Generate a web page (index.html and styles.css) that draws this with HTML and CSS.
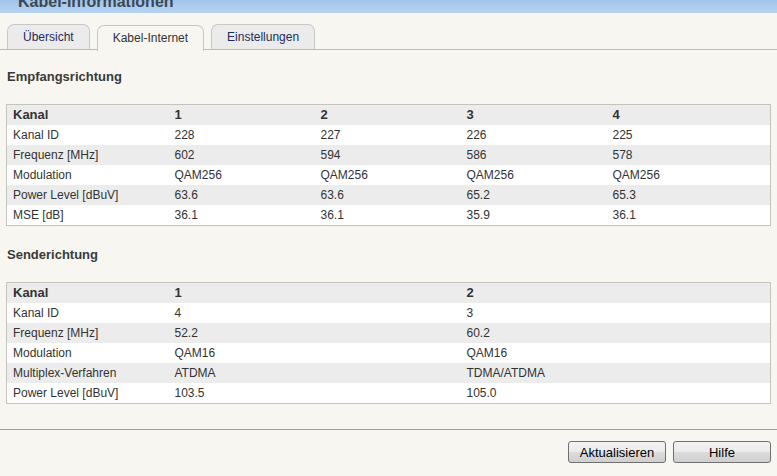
FILE: index.html
```html
<!DOCTYPE html>
<html lang="de">
<head>
    <meta charset="UTF-8">
    <title>Kabel-Informationen</title>
    <link rel="stylesheet" href="styles.css">
</head>
<body>
    <div class="title-bar">
        <h1>Kabel-Informationen</h1>
    </div>

    <ul class="tabs">
        <li class="tab">Übersicht</li>
        <li class="tab active">Kabel-Internet</li>
        <li class="tab">Einstellungen</li>
    </ul>

    <div class="content">
        <h2>Empfangsrichtung</h2>
        <table class="info">
            <colgroup>
                <col class="col-label">
                <col class="col-val">
                <col class="col-val">
                <col class="col-val">
                <col>
            </colgroup>
            <tr class="head"><th>Kanal</th><th>1</th><th>2</th><th>3</th><th>4</th></tr>
            <tr><td>Kanal ID</td><td>228</td><td>227</td><td>226</td><td>225</td></tr>
            <tr><td>Frequenz [MHz]</td><td>602</td><td>594</td><td>586</td><td>578</td></tr>
            <tr><td>Modulation</td><td>QAM256</td><td>QAM256</td><td>QAM256</td><td>QAM256</td></tr>
            <tr><td>Power Level [dBuV]</td><td>63.6</td><td>63.6</td><td>65.2</td><td>65.3</td></tr>
            <tr><td>MSE [dB]</td><td>36.1</td><td>36.1</td><td>35.9</td><td>36.1</td></tr>
        </table>

        <h2>Senderichtung</h2>
        <table class="info">
            <colgroup>
                <col class="col-label">
                <col class="col-wide">
                <col>
            </colgroup>
            <tr class="head"><th>Kanal</th><th>1</th><th>2</th></tr>
            <tr><td>Kanal ID</td><td>4</td><td>3</td></tr>
            <tr><td>Frequenz [MHz]</td><td>52.2</td><td>60.2</td></tr>
            <tr><td>Modulation</td><td>QAM16</td><td>QAM16</td></tr>
            <tr><td>Multiplex-Verfahren</td><td>ATDMA</td><td>TDMA/ATDMA</td></tr>
            <tr><td>Power Level [dBuV]</td><td>103.5</td><td>105.0</td></tr>
        </table>
    </div>

    <div class="actions">
        <button class="btn">Aktualisieren</button>
        <button class="btn">Hilfe</button>
    </div>
</body>
</html>
```

FILE: styles.css
```css
body {
    margin: 0;
    background: #f7f6f1;
    font-family: "Liberation Sans", Arial, sans-serif;
    font-size: 12px;
    color: #333;
}

.title-bar {
    height: 13px;
    overflow: hidden;
    background: linear-gradient(#a2c4ea, #b6d3f1);
}

.title-bar h1 {
    margin: -8px 0 0 18px;
    font-size: 16px;
    line-height: 19px;
    color: #3b4854;
}

.tabs {
    display: flex;
    gap: 7px;
    list-style: none;
    margin: 10px 0 0;
    padding: 0 0 0 7px;
    border-bottom: 1px solid #bcbcb4;
    height: 26px;
}

.tab {
    height: 25px;
    line-height: 25px;
    padding: 0 15px;
    border: 1px solid #c8c8c8;
    border-bottom: none;
    border-radius: 7px 7px 0 0;
    background: #ebebeb;
    color: #1d2c5a;
    font-size: 12px;
    box-sizing: border-box;
    margin-top: 1px;
}

.tab.active {
    background: #f7f6f1;
    color: #333;
    height: 26px;
    position: relative;
    top: 1px;
}

.content {
    padding: 0 6px;
}

h2 {
    font-size: 13px;
    line-height: 16px;
    margin: 19px 1px 19px;
    color: #3a3a3a;
}

.content table + h2 {
    margin-top: 21px;
}

.info {
    width: 100%;
    border-collapse: collapse;
    table-layout: fixed;
    border: 1px solid #c4c4bc;
    background: #fff;
}

.col-label { width: 162px; }
.col-val { width: 146px; }
.col-wide { width: 292px; }

.info th,
.info td {
    height: 20px;
    padding: 0 6px;
    line-height: 20px;
    text-align: left;
    white-space: nowrap;
}

.info th {
    font-size: 13px;
    font-weight: bold;
}

.info tr:nth-child(odd) {
    background: #ececec;
}

.actions {
    margin-top: 25px;
    border-top: 1px solid #8ea8a2;
    padding: 11px 6px 0;
    display: flex;
    justify-content: flex-end;
    gap: 7px;
}

.btn {
    width: 98px;
    height: 22px;
    border: 1px solid #707070;
    border-radius: 3px;
    background: linear-gradient(#f2f2f2, #ebebeb 50%, #dddddd 50%, #cfcfcf);
    font-family: "Liberation Sans", Arial, sans-serif;
    font-size: 13px;
    color: #000;
    padding: 0;
}
```
